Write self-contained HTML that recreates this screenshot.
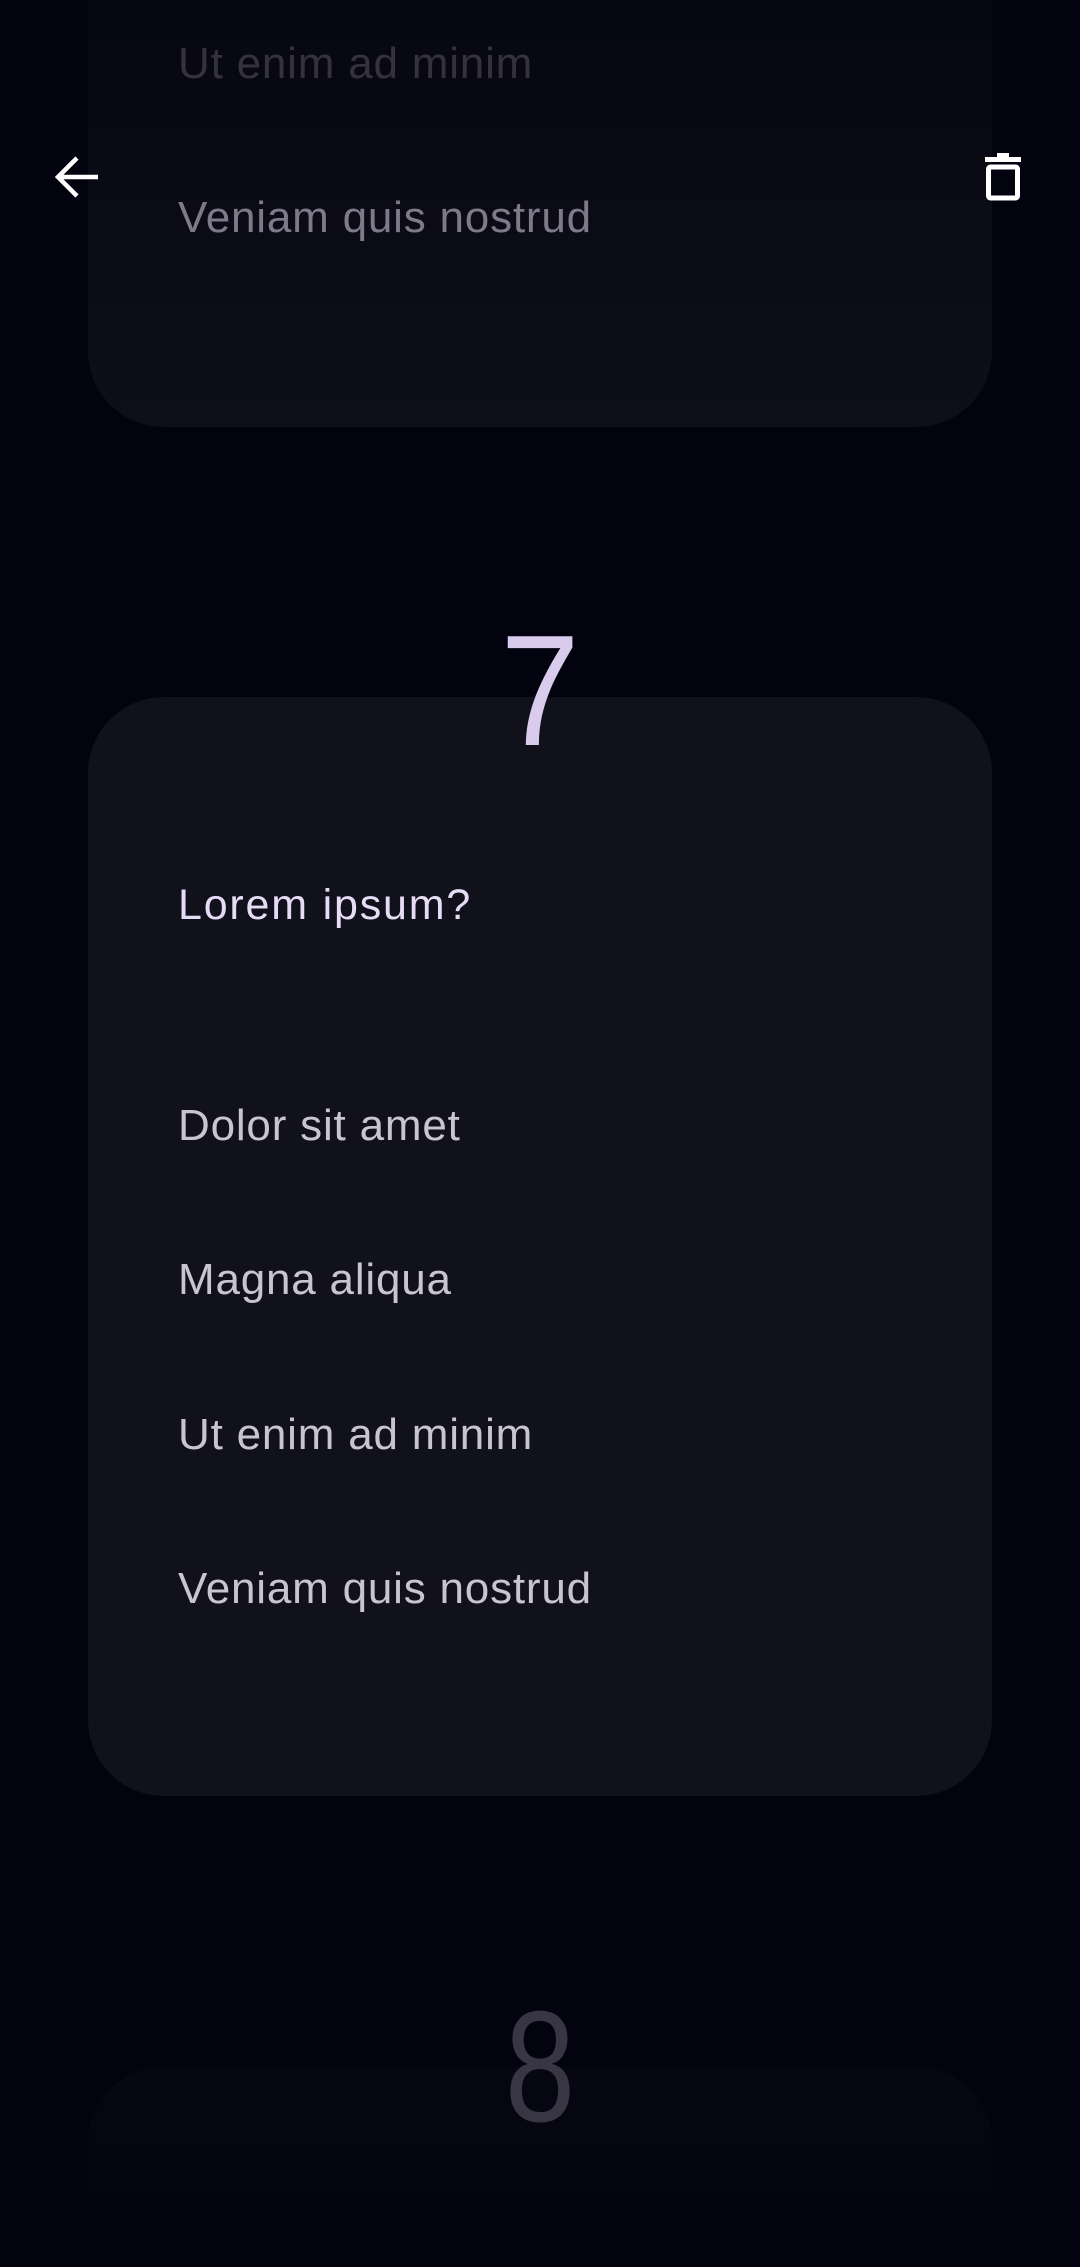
<!DOCTYPE html>
<html><head><meta charset="utf-8"><style>
html,body{margin:0;padding:0;width:1080px;height:2160px;background:#03030f;overflow:hidden;font-family:"Liberation Sans",sans-serif;}
.abs{position:absolute;}
.card{position:absolute;left:88px;width:904px;border-radius:76px;}
.t{position:absolute;left:178px;font-size:44px;font-weight:300;white-space:nowrap;line-height:1;letter-spacing:0.8px;}
</style></head><body>
<div class="card" style="top:-100px;height:527px;border-radius:0 0 76px 76px;background:linear-gradient(#03030f 0px,#080812 160px,#0f0f1a 527px);"></div>
<div class="t" style="top:42px;color:#34323f;">Ut enim ad minim</div>
<div class="t" style="top:196px;color:#7f7a8b;">Veniam quis nostrud</div>

<svg class="abs" style="left:52px;top:152px" width="50" height="50" viewBox="0 0 50 50"><path d="M46 25H8M25 6L6 25l19 19" stroke="#fff" stroke-width="4.5" fill="none"/></svg>
<svg class="abs" style="left:983px;top:150px" width="40" height="52" viewBox="0 0 40 52"><path d="M14 3h12v4h12v5H2V7h12z" fill="#fff"/><rect x="5.5" y="17" width="29" height="31" rx="2" stroke="#fff" stroke-width="5" fill="none"/></svg>

<div class="card" style="top:697px;height:1099px;background:#11111c;"></div>
<div class="abs" style="left:0;width:1080px;top:612px;text-align:center;font-size:158px;color:#d8cbec;line-height:1;transform:scaleX(0.9);">7</div>
<div class="t" style="top:884px;color:#e6dcf5;font-size:43px;letter-spacing:1.8px;">Lorem ipsum?</div>
<div class="t" style="top:1104px;color:#c9c4d2;">Dolor sit amet</div>
<div class="t" style="top:1258px;color:#c9c4d2;">Magna aliqua</div>
<div class="t" style="top:1413px;color:#c9c4d2;">Ut enim ad minim</div>
<div class="t" style="top:1567px;color:#c9c4d2;">Veniam quis nostrud</div>

<div class="card" style="top:2067px;height:200px;background:linear-gradient(#070712,#03030f);"></div>
<div class="abs" style="left:0;width:1080px;top:1988px;text-align:center;font-size:158px;color:#383545;line-height:1;transform:scaleX(0.8);">8</div>
</body></html>
